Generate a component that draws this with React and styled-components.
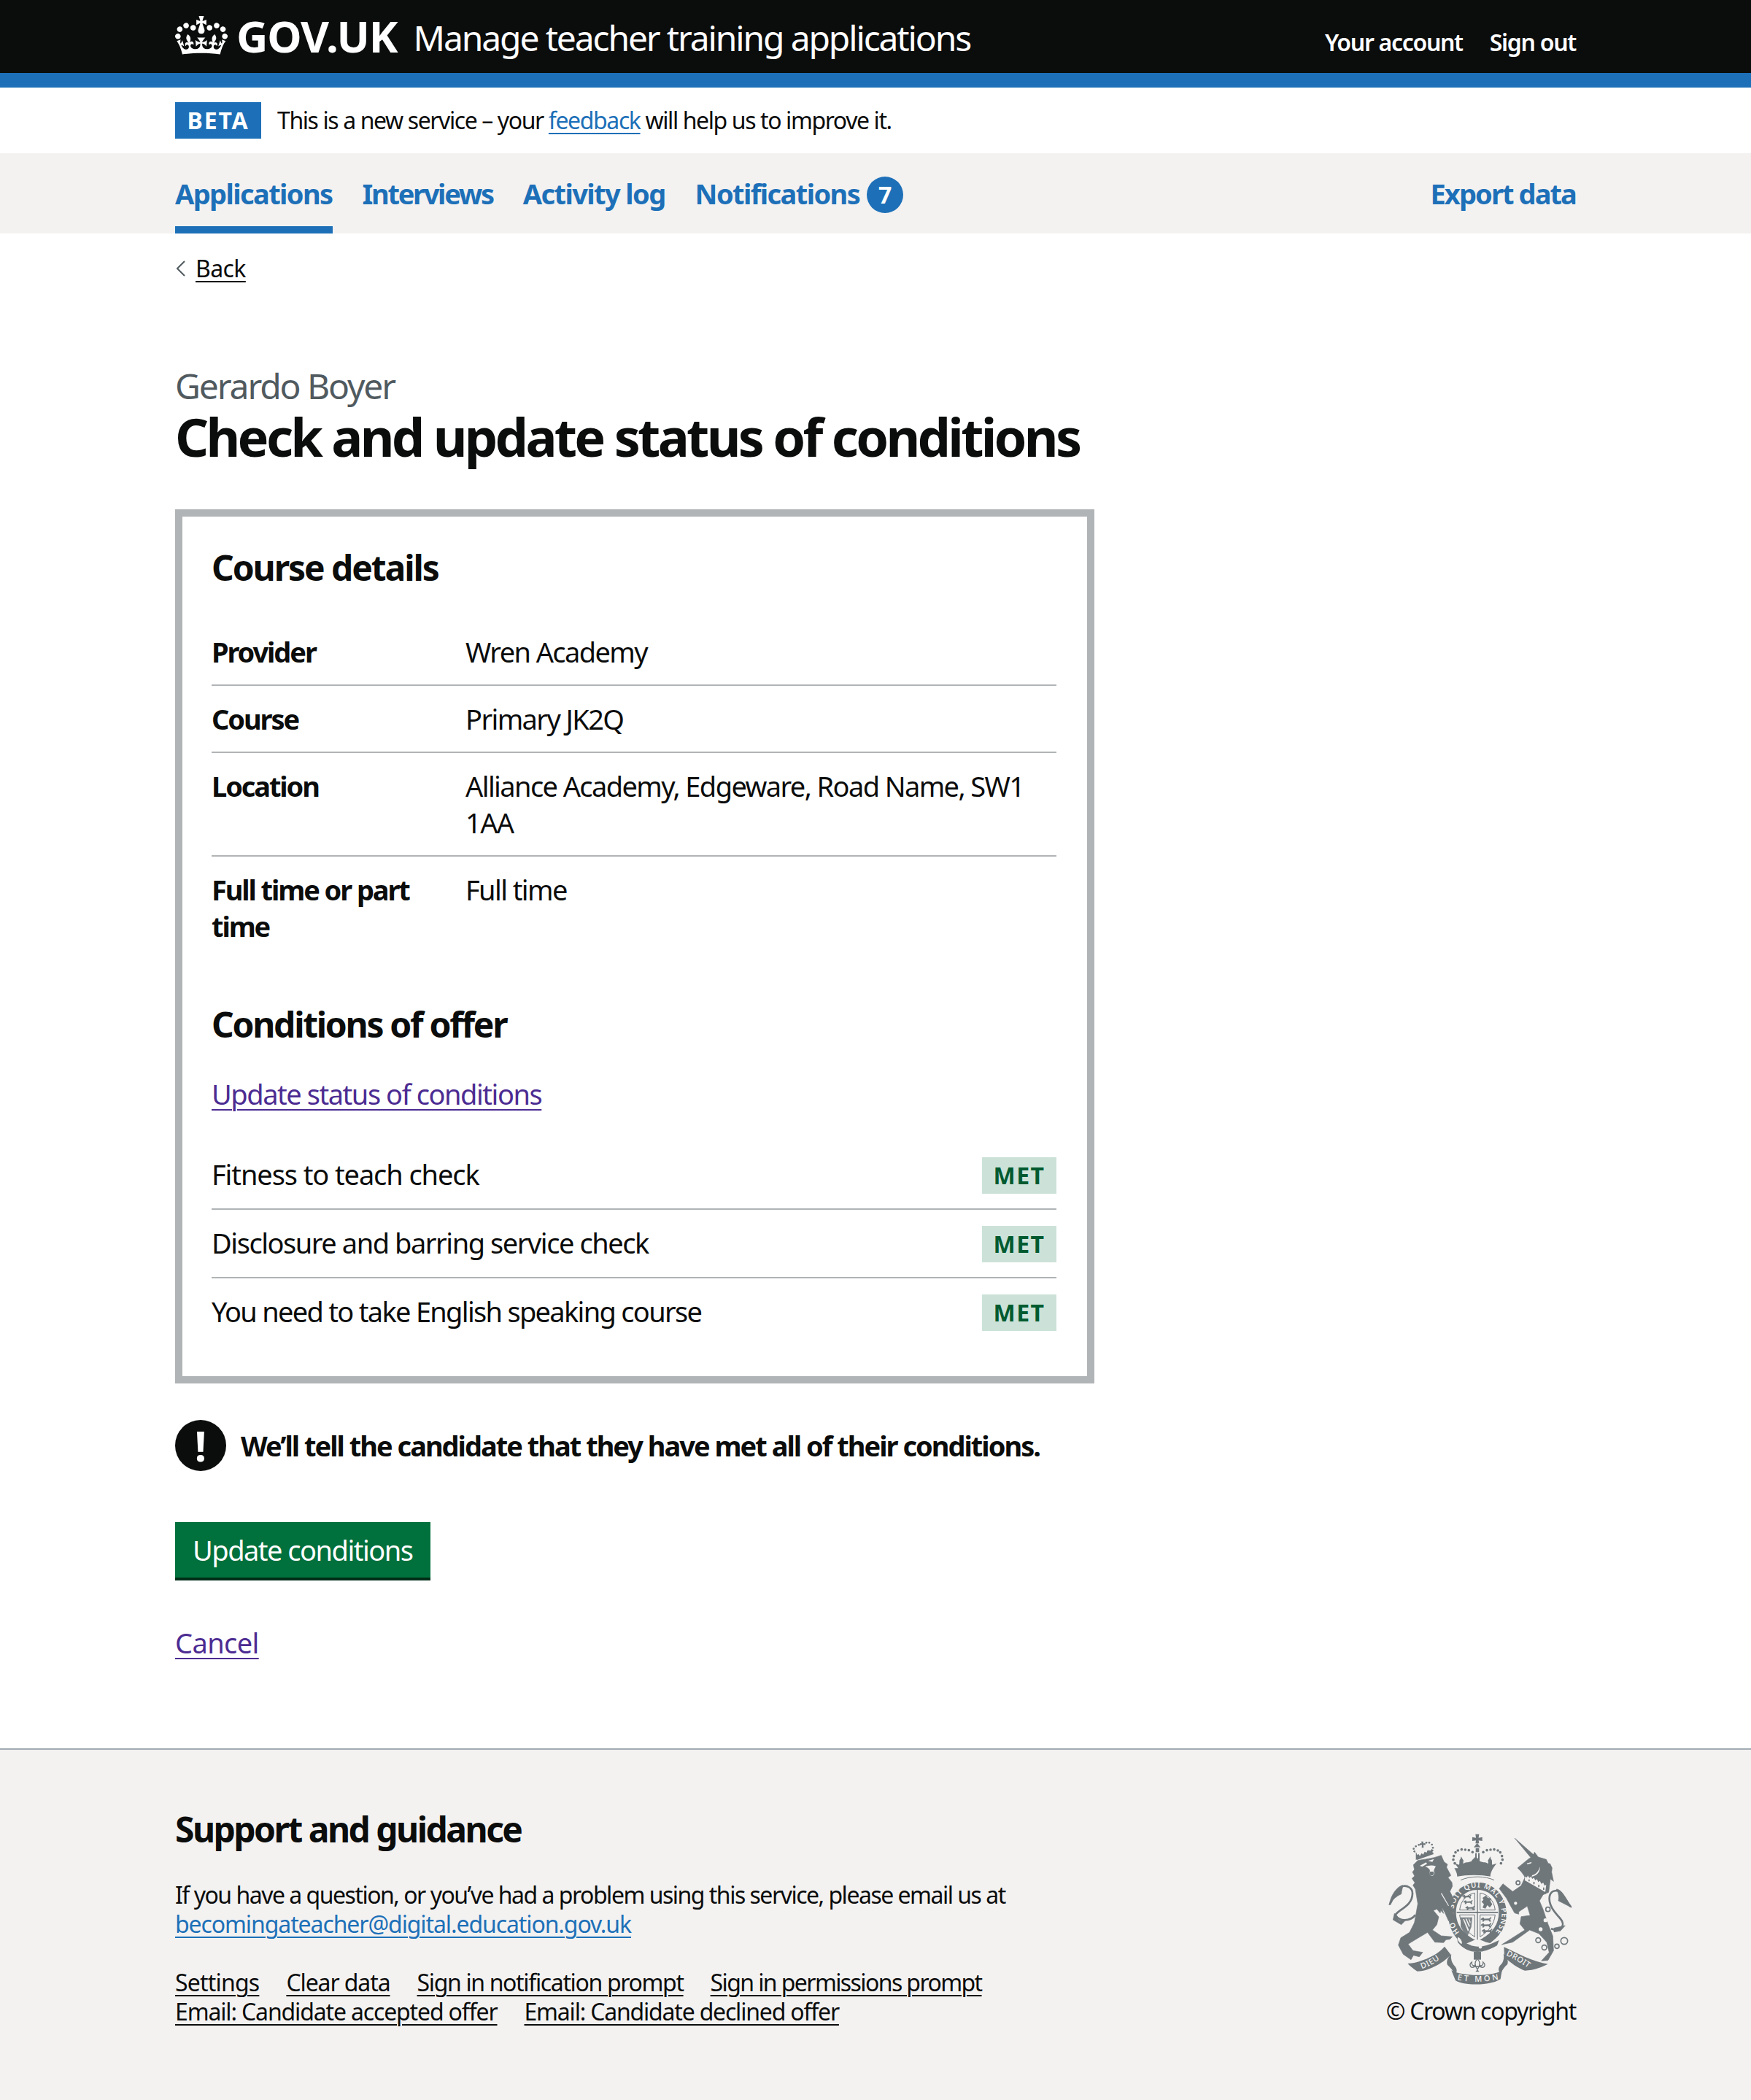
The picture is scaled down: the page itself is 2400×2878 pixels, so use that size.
import React from "react";
import styled, { createGlobalStyle } from "styled-components";

const FONT = `"Noto Sans", "Liberation Sans", Arial, sans-serif`;
const INK = "#0b0c0c";
const BLUE = "#1d70b8";
const VISITED = "#4c2c92";
const GREY = "#b1b4b6";

const Global = createGlobalStyle`
  html, body { margin: 0; padding: 0; background: #fff; }
  body { font-family: ${FONT}; color: ${INK}; font-size: 38px; line-height: 50px; }
  * { box-sizing: border-box; }
`;

const Container = styled.div`
  width: 1920px;
  margin: 0 auto;
`;

const HeaderBar = styled.header`
  background: ${INK};
  border-bottom: 20px solid ${BLUE};
  height: 120px;
`;
const HeaderInner = styled(Container)`
  display: flex;
  justify-content: space-between;
  height: 100px;
`;
const Brand = styled.div`
  display: flex;
  align-items: flex-start;
  padding-top: 22px;
  color: #fff;
`;
const Crown = styled.svg`
  width: 72px;
  height: 53px;
  flex: none;
`;
const Logotype = styled.span`
  font-weight: 700;
  font-size: 60px;
  line-height: 54px;
  letter-spacing: -1.1px;
  margin-left: 12px;
`;
const ServiceName = styled.span`
  font-size: 48px;
  line-height: 60px;
  letter-spacing: -2.15px;
  margin-left: 22px;
`;
const AccountNav = styled.nav`
  display: flex;
  gap: 37px;
  padding-top: 38px;
`;
const AccountLink = styled.a`
  color: #fff;
  font-size: 32px;
  line-height: 40px;
  font-weight: 600;
  letter-spacing: -1.3px;
`;

const PhaseBanner = styled(Container)`
  height: 90px;
  display: flex;
  align-items: center;
  gap: 22px;
`;
const PhaseTag = styled.strong`
  width: 118px;
  height: 50px;
  background: ${BLUE};
  color: #fff;
  font-size: 32px;
  line-height: 50px;
  font-weight: 700;
  letter-spacing: 1.8px;
  text-align: center;
`;
const PhaseText = styled.span`
  font-size: 32px;
  line-height: 40px;
  letter-spacing: -1.4px;
`;
const PhaseLink = styled.a`
  color: ${BLUE};
  text-decoration: underline;
  text-decoration-thickness: 2px;
  text-underline-offset: 5px;
`;

const PrimaryNav = styled.nav`
  height: 110px;
  background: #f3f2f1;
`;
const PrimaryInner = styled(Container)`
  display: flex;
  justify-content: space-between;
`;
const NavList = styled.div`
  display: flex;
  gap: 41px;
`;
const NavItem = styled.a`
  height: 110px;
  display: flex;
  align-items: flex-start;
  gap: 10px;
  padding-top: 30px;
  color: ${BLUE};
  font-size: 38px;
  line-height: 50px;
  font-weight: 700;
  letter-spacing: ${(p) => p.$ls || "-1.6px"};
  border-bottom: 10px solid ${(p) => (p.$active ? BLUE : "transparent")};
`;
const CountBadge = styled.span`
  width: 50px;
  height: 50px;
  margin-top: 2px;
  border-radius: 50%;
  background: ${BLUE};
  color: #fff;
  font-size: 32px;
  line-height: 50px;
  text-align: center;
  letter-spacing: 0;
`;

const BackLink = styled.a`
  display: flex;
  align-items: center;
  gap: 10px;
  margin-top: 28px;
  font-size: 32px;
  line-height: 40px;
  letter-spacing: -0.6px;
  color: ${INK};
`;
const BackText = styled.span`
  text-decoration: underline;
  text-decoration-thickness: 2px;
  text-underline-offset: 5px;
`;
const Chevron = styled.svg`
  width: 18px;
  height: 26px;
  flex: none;
`;

const Caption = styled.div`
  margin-top: 111px;
  font-size: 48px;
  line-height: 59px;
  color: #505a5f;
  letter-spacing: -2.1px;
`;
const Title = styled.h1`
  margin: 0 0 60px;
  font-size: 72px;
  line-height: 80px;
  font-weight: 700;
  letter-spacing: -3.7px;
`;

const Inset = styled.section`
  width: 1260px;
  border: 10px solid ${GREY};
  padding: 40px 42px 42px 40px;
`;
const SectionHeading = styled.h2`
  margin: 0 0 40px;
  font-size: 48px;
  line-height: 60px;
  font-weight: 700;
  letter-spacing: -2.1px;
`;
const SummaryRow = styled.div`
  display: grid;
  grid-template-columns: 348px 1fr;
  padding: 20px 0;
  border-bottom: ${(p) => (p.$last ? "none" : `2px solid ${GREY}`)};
`;
const SummaryKey = styled.div`
  font-weight: 700;
  letter-spacing: -2.1px;
  padding-right: 40px;
`;
const SummaryValue = styled.div`
  letter-spacing: -1.6px;
`;
const ConditionsHeading = styled(SectionHeading)`
  margin-top: 60px;
  letter-spacing: -2.3px;
`;
const TextLink = styled.a`
  color: ${VISITED};
  display: block;
  width: fit-content;
  letter-spacing: ${(p) => p.$ls || "-1.45px"};
  text-decoration: underline;
  text-decoration-thickness: 2px;
  text-underline-offset: 6px;
`;
const ConditionList = styled.div`
  margin-top: 40px;
`;
const ConditionRow = styled.div`
  display: flex;
  justify-content: space-between;
  align-items: center;
  padding: 22px 0 20px;
  border-bottom: ${(p) => (p.$last ? "none" : `2px solid ${GREY}`)};
`;
const ConditionText = styled.span`
  line-height: 46px;
  padding-bottom: 4px;
  letter-spacing: ${(p) => p.$ls};
`;
const MetTag = styled.strong`
  width: 102px;
  height: 50px;
  background: #cce2d8;
  color: #005a30;
  font-size: 32px;
  line-height: 50px;
  font-weight: 700;
  letter-spacing: 1.5px;
  text-align: center;
`;

const Warning = styled.div`
  display: flex;
  align-items: center;
  gap: 20px;
  margin-top: 50px;
  height: 70px;
`;
const WarningIcon = styled.span`
  width: 70px;
  height: 70px;
  border-radius: 50%;
  background: ${INK};
  color: #fff;
  font-size: 58px;
  line-height: 70px;
  font-weight: 700;
  text-align: center;
  flex: none;
`;
const WarningText = styled.strong`
  letter-spacing: -2px;
`;
const Button = styled.a`
  display: block;
  width: 350px;
  height: 80px;
  margin-top: 70px;
  padding-left: 24px;
  background: #00703c;
  border-bottom: 4px solid #002d18;
  color: #fff;
  line-height: 76px;
  letter-spacing: -1.5px;
`;
const CancelRow = styled.div`
  margin-top: 60px;
`;

const Footer = styled.footer`
  margin-top: 120px;
  height: 482px;
  background: #f3f2f1;
  border-top: 2px solid #a1acb2;
`;
const FooterInner = styled(Container)`
  display: flex;
  justify-content: space-between;
  padding-top: 79px;
`;
const FooterMain = styled.div`
  width: 1260px;
`;
const FooterHeading = styled.h2`
  margin: 0 0 40px;
  font-size: 48px;
  line-height: 60px;
  font-weight: 700;
  letter-spacing: -2.55px;
`;
const FooterText = styled.p`
  margin: 0 0 40px;
  font-size: 32px;
  line-height: 40px;
  letter-spacing: -1.5px;
`;
const FooterMail = styled.a`
  display: block;
  color: ${BLUE};
  letter-spacing: -1.1px;
  text-decoration: underline;
  text-decoration-thickness: 2px;
  text-underline-offset: 5px;
`;
const FooterLinks = styled.div`
  display: flex;
  flex-wrap: wrap;
  gap: 0 37px;
  font-size: 32px;
  line-height: 40px;
`;
const RowBreak = styled.span`
  flex-basis: 100%;
  height: 0;
`;
const FooterLink = styled.a`
  color: ${INK};
  letter-spacing: ${(p) => p.$ls};
  text-decoration: underline;
  text-decoration-thickness: 2px;
  text-underline-offset: 5px;
`;
const FooterAside = styled.div`
  display: flex;
  flex-direction: column;
  align-items: flex-end;
`;
const Crest = styled.svg`
  width: 260px;
  height: 220px;
  margin: 28px 0 11px 0;
`;
const Copyright = styled.div`
  font-size: 32px;
  line-height: 40px;
  letter-spacing: -1.3px;
`;

const CrownPath =
  "M25 30.2c3.5 1.5 7.7-.2 9.1-3.7 1.5-3.6-.2-7.8-3.9-9.2-3.6-1.4-7.6.3-9.1 3.9-1.4 3.5.3 7.5 3.9 9zM9 39.5c3.6 1.5 7.8-.2 9.2-3.7 1.5-3.6-.2-7.8-3.9-9.1-3.6-1.5-7.6.2-9.1 3.8-1.4 3.5.3 7.5 3.8 9zM4.4 57.2c3.5 1.5 7.7-.2 9.1-3.8 1.5-3.6-.2-7.7-3.9-9.1-3.5-1.5-7.6.3-9.1 3.8-1.4 3.5.3 7.6 3.9 9.1zm38.3-21.4c3.5 1.5 7.7-.2 9.1-3.8 1.5-3.6-.2-7.7-3.9-9.1-3.6-1.5-7.6.3-9.1 3.8-1.3 3.6.4 7.7 3.9 9.1zm64.4-5.6c-3.6 1.5-7.8-.2-9.1-3.7-1.5-3.6.2-7.8 3.8-9.2 3.6-1.4 7.7.3 9.2 3.9 1.3 3.5-.4 7.5-3.9 9zm15.9 9.3c-3.6 1.5-7.7-.2-9.1-3.7-1.5-3.6.2-7.8 3.7-9.1 3.6-1.5 7.7.2 9.2 3.8 1.5 3.5-.3 7.5-3.8 9zm4.7 17.7c-3.6 1.5-7.8-.2-9.2-3.8-1.5-3.6.2-7.7 3.9-9.1 3.6-1.5 7.7.3 9.2 3.8 1.3 3.5-.4 7.6-3.9 9.1zM89.3 35.8c-3.6 1.5-7.8-.2-9.2-3.8-1.4-3.6.2-7.7 3.9-9.1 3.6-1.5 7.7.3 9.2 3.8 1.4 3.6-.3 7.7-3.9 9.1zM69.7 17.7l8.9 4.7V9.3l-8.9 2.8c-.2-.3-.5-.6-.9-.9L72.4 0H59.6l3.5 11.2c-.3.3-.6.5-.9.9l-8.8-2.8v13.1l8.8-4.7c.3.3.6.7.9.9l-5 15.4v.1c-.2.8-.4 1.6-.4 2.4 0 4.1 3.1 7.5 7 8.1h.2c.3 0 .7.1 1 .1.4 0 .7 0 1-.1h.2c4-.6 7.1-4.1 7.1-8.1 0-.8-.1-1.7-.4-2.4V34l-5.1-15.4c.4-.2.7-.6 1-.9zM66 92.8c16.9 0 32.8 1.1 47.1 3.2 4-16.9 8.9-26.7 14-33.5l-9.6-3.4c1 4.9 1.1 7.2 0 10.2-1.5-1.4-3-4.3-4.2-8.7L108.6 76c2.8-2 5-3.2 7.5-3.3-4.4 9.4-10 11.9-13.6 11.2-4.3-.8-6.3-4.6-5.6-7.9 1-4.7 5.7-5.9 8-.5 4.3-8.7-3-11.4-7.6-8.8 7.1-7.2 7.9-13.5 2.1-21.1-8 6.1-8.1 12.3-4.5 20.8-4.7-5.4-12.1-2.5-9.5 6.2 3.4-5.2 7.9-2 7.2 3.1-.6 4.3-6.4 7.8-13.5 7.2-10.3-.9-10.9-8-11.2-13.8 2.5-.5 7.1 1.8 11 7.3L80.2 60c-4.1 4.4-8 5.3-12.3 5.4 1.4-4.4 8-11.6 8-11.6H55.5s6.4 7.2 7.9 11.6c-4.2-.1-8-1-12.3-5.4l1.4 16.4c3.9-5.5 8.5-7.7 10.9-7.3-.3 5.8-.9 12.8-11.1 13.8-7.2.6-12.9-2.9-13.5-7.2-.7-5 3.8-8.3 7.1-3.1 2.7-8.7-4.6-11.6-9.4-6.2 3.7-8.5 3.6-14.7-4.6-20.8-5.8 7.6-5 13.9 2.2 21.1-4.7-2.6-11.9.1-7.7 8.8 2.3-5.5 7.1-4.2 8.1.5.7 3.3-1.3 7.1-5.7 7.9-3.5.7-9-1.8-13.5-11.2 2.5.1 4.7 1.3 7.5 3.3l-4.7-15.4c-1.2 4.4-2.7 7.2-4.3 8.7-1.1-3-.9-5.3 0-10.2l-9.5 3.4c5 6.9 9.9 16.7 14 33.5 14.8-2.1 30.8-3.2 47.7-3.2z";

const CREST = "#6f777b";
const BG = "#f3f2f1";

const PASSANT = "M0 7L6 2 11 0 14 5 32 4 38-1 41 1 36 8 39 16 33 16 30 11 15 11 12 16 6 16 8 9 3 10Z";
const LIONS_TL = [[290, 275], [295, 298], [303, 322]];
const LIONS_BR = [[388, 368], [388, 392], [392, 416]];

const ARCH_L = [[355, 100], [340, 92], [325, 90], [310, 89], [295, 93], [285, 101], [278, 116], [276, 131], [282, 146]];
const ARCH_R = ARCH_L.map(([x, y]) => [754 - x, y]);
const LION_DOTS = [[116, 97], [113, 86], [122, 76], [134, 70], [165, 61], [177, 61], [188, 69], [192, 82], [190, 93]];
const CHAIN = [[542, 226, 8], [532, 310, 9], [665, 335, 9], [625, 462, 10], [650, 492, 10], [702, 487, 9], [732, 465, 14]];

function RoyalArms() {
  return (
    <Crest viewBox="0 0 780 660" aria-hidden="true">
      <defs>
        <path id="garter-arc" d="M302 430A100 110 0 1 1 448 430" />
        <path id="motto-l" d="M146 580Q205 560 250 512" />
        <path id="motto-m" d="M292 625Q375 642 468 622" />
        <path id="motto-r" d="M492 524Q550 550 604 592" />
      </defs>

      {/* royal crown */}
      <g fill={CREST}>
        <path d="M367 26h15l-2 15 15-3v16l-15-2 2 12h-15l2-12-15 2V38l15 3z" />
        <path d="M374 62l14 18h-28z" />
        <path d="M368 84h14v16h-14z" />
        <path d="M366 104h6v30h-6zM378 104h6v30h-6z" />
        <path d="M296 166c-4-8-10-14-14-20l18 6c2-8 0-14 2-20 6-4 4-10 6-14 4 6 6 12 10 16-2 6-2 10 0 14 6-6 12-6 18-6l14-4c4-8 12-12 12-14l6-6 6 6c2 2 8 6 12 14l14 4c6 0 12 0 18 6 2-4 2-8 0-14 4-4 6-10 10-16 2 4 0 10 6 14 2 6 0 12 2 20l18-6c-4 6-10 12-14 20-6 10-12 22-12 34-36-8-100-8-136 0 0-12-6-24-12-34z" />
        {[...ARCH_L, ...ARCH_R].map(([x, y]) => (
          <circle key={`a${x}-${y}`} cx={x} cy={y} r="5.4" />
        ))}
      </g>
      <path d="M306 215c40-18 100-18 138 0" fill="none" stroke={CREST} strokeWidth="3" />

      {/* shield and garter */}
      <path
        fill={CREST}
        d="M375 224c66 0 120 58 120 128 0 48-22 88-56 112l-12 10-16-4-36-14-36 16-20 8c-36-24-64-68-64-128 0-70 54-128 120-128z"
      />
      <path
        fill={BG}
        d="M375 255c50 0 88 38 88 92 0 58-36 94-88 118-52-24-88-60-88-118 0-54 38-92 88-92z"
      />
      <path fill={CREST} d="M373 255h4v205h-4zM290 345h170v5H290z" />
      <path fill="none" stroke={CREST} strokeWidth="3" d="M386 268c30 4 58 30 62 70h-62zM386 358h62c-4 40-30 70-62 90zM364 268c-30 4-58 30-62 70h62zM364 358h-62c4 40 30 70 62 90z" />
      <g fill={CREST}>
        {LIONS_TL.map(([x, y]) => (
          <path key={`t${x}`} d={PASSANT} transform={`translate(${x + 22} ${y}) scale(.95)`} />
        ))}
        {LIONS_BR.map(([x, y]) => (
          <path key={`b${y}`} d={PASSANT} transform={`translate(${x} ${y}) scale(1.1)`} />
        ))}
        <path d="M396 288l14-10 8 10 14 2-4 10 8 14-10 14-10-10-8 14-12-4 6-14-10-10 8-8z" />
        <path d="M306 368h48l-4 40-14 34-8 4-22-40z" opacity=".9" />
      </g>
      <path fill={BG} d="M316 376l4-2 20 46-4 6zM326 374l4-1 14 30-3 6zM338 373l3 0 6 14-2 6z" />
      <text fontFamily={FONT} fontWeight="600" fontSize="30" fill={BG}>
        <textPath href="#garter-arc" textLength="490" lengthAdjust="spacing">HONI SOIT QUI MAL Y PENSE</textPath>
      </text>
      <path fill={CREST} d="M292 452c20 12 50 34 84 36 32 2 60-14 88-26l-8 22c-24 14-52 26-82 26-32 0-62-16-80-40z" />
      <path fill={BG} d="M300 452c-4-4-8-2-6 6 2 10 10 16 16 20 4-6 0-18-10-26z" />
      <circle cx="353" cy="478" r="6.5" fill={BG} />
      <circle cx="387" cy="490" r="6.5" fill={BG} />

      {/* lion crown */}
      <g fill={CREST}>
        <path d="M144 56h8l1 8 8-1v8l-8-1 1 12h-8l1-12-9 2v-8l8 0z" />
        <path d="M122 98l6 14 6-4 4 8 8-12 6 6 6-12 8 4 4-10 12 2 6-8 4 8-6 14c-20 4-40 12-64 24z" />
        <path d="M124 124l68-24 3 8-68 24z" />
        {LION_DOTS.map(([x, y]) => (
          <circle key={`l${x}-${y}`} cx={x} cy={y} r="4" />
        ))}
      </g>

      {/* lion */}
      <g fill={CREST} stroke={CREST} strokeWidth="2" strokeLinejoin="round">
        <path d="M112 152L130 134C150 130 190 127 226 113L238 140 252 150 248 162 266 196 254 204 270 224 272 240 262 262 282 302 264 316 272 346 286 372 278 390 256 382 240 346 228 326 236 352 224 340 222 350 208 334 194 340 216 366 208 398 190 420 226 444 272 448 262 458 246 460 236 472 200 470 170 430 126 456 90 478 110 505 150 512 136 530 112 524 102 542 70 520 50 482 60 452 96 430 116 390 130 312 120 252 110 236 118 226 106 208 117 198 108 182 116 172Z" />
        <path
          d="M120 358C98 386 54 386 38 358 50 336 108 322 108 270 108 246 86 236 68 240 50 246 30 286 14 316"
          fill="none"
          strokeWidth="8"
        />
        <path d="M68 236C48 240 20 270 12 318 22 298 40 282 62 272 62 262 68 248 68 236z" />
        <path d="M34 352L28 378 62 398 78 382 52 380z" />
      </g>
      <path fill={BG} d="M138 156l26-14 4 6-20 12zM172 136l24-8-6 12zM160 160c14-6 30-8 44-2-4 8-8 12-8 20a10 12 0 1 1-16 0c0-8-8-14-20-18z" />
      <path fill={CREST} d="M180 180a9 10 0 1 0 14 0z" />
      <path fill={BG} d="M228 268l30 52-3 1-30-50z" />

      {/* unicorn */}
      <g fill={CREST} stroke={CREST} strokeWidth="2" strokeLinejoin="round">
        <path d="M528 42L610 114 596 124z" />
        <path d="M540 165L585 128 602 118 610 100 625 120 658 130 666 146 674 148 682 165 680 182 688 220 675 210 668 265 645 275 630 300 645 335 665 395 685 445 688 505 665 545 638 547 670 512 660 470 628 435 590 420 520 470 475 480 515 455 570 420 550 395 555 365 592 360 580 322 545 345 545 355 528 350 512 322 495 290 465 250 480 230 520 262 555 238 570 205 568 198 555 180Z" />
        <path
          d="M678 415C720 430 740 400 715 372 690 345 665 315 672 280 678 255 710 250 725 275 735 290 750 315 760 325"
          fill="none"
          strokeWidth="8"
        />
        <path d="M700 252C720 252 740 290 762 328 740 316 724 308 708 300 712 284 708 266 700 252z" />
        <path d="M690 412l46-10-20 22-26 4z" />
      </g>
      <path fill={BG} d="M578 146l20-6-2 6-16 4zM600 195c16-4 28-18 32-36 2 22-12 38-34 42z" />
      <path fill={BG} d="M571 200l8 4 3-8 7 10 6-6 6 10 6-5 6 11 7-5 5 12 7-5 6 12 8-4 5 12 7-4-4 30-84-48z" />
      <path fill={CREST} d="M571 218l86 50-1 4-88-50zM585 212h5v8h-5zM605 222h5v10h-5zM625 234h5v10h-5zM645 245h5v10h-5z" />
      <circle cx="655" cy="380" r="8" fill={BG} />
      <circle cx="635" cy="417" r="8" fill={BG} />
      {CHAIN.map(([x, y, r]) => (
        <circle key={`c${x}-${y}`} cx={x} cy={y} r={r} fill={BG} stroke={CREST} strokeWidth="5" />
      ))}

      {/* motto ribbons */}
      <g fill={CREST}>
        <path d="M88 558C130 556 205 530 240 488L266 522C230 560 170 590 128 590 112 580 100 570 88 558z" />
        <path d="M268 520c-16 14-22 30-16 44 12 10 22 22 30 38 12-8 10-24-2-36-10-10-16-30-12-46z" />
        <path d="M268 586C310 612 440 612 476 586L470 622C430 650 320 650 285 628z" />
        <path d="M482 518c16 14 22 30 16 44-12 10-20 22-26 36-14-8-12-24 0-36 10-10 14-28 10-44z" />
        <path d="M484 490C540 516 600 550 665 560 640 572 610 585 570 587 540 575 510 555 486 530z" />
        <path d="M360 510h30v32h-30z" />
        <path d="M375 582l-8 10h16z" />
      </g>
      <g fill={BG} stroke={CREST} strokeWidth="4">
        <path d="M375 538C388 552 388 566 375 582 362 566 362 552 375 538Z" />
        <path d="M362 572C344 580 340 560 352 552 350 562 356 568 364 566Z" />
        <path d="M388 572C406 580 410 560 398 552 400 562 394 568 386 566Z" />
      </g>
      <path d="M358 570H392" stroke={CREST} strokeWidth="5" />
      <g fontFamily={FONT} fontWeight="500" fontSize="33" fill={BG}>
        <text letterSpacing="2"><textPath href="#motto-l">DIEU</textPath></text>
        <text><textPath href="#motto-m" textLength="172" lengthAdjust="spacing">ET MON</textPath></text>
        <text letterSpacing="1"><textPath href="#motto-r">DROIT</textPath></text>
      </g>
    </Crest>
  );
}

export default function App() {
  return (
    <>
      <Global />
      <HeaderBar>
        <HeaderInner>
          <Brand>
            <Crown viewBox="0 0 132 97" aria-hidden="true">
              <path fill="currentColor" fillRule="evenodd" d={CrownPath} />
            </Crown>
            <Logotype>GOV.UK</Logotype>
            <ServiceName>Manage teacher training applications</ServiceName>
          </Brand>
          <AccountNav>
            <AccountLink>Your account</AccountLink>
            <AccountLink>Sign out</AccountLink>
          </AccountNav>
        </HeaderInner>
      </HeaderBar>

      <PhaseBanner>
        <PhaseTag>BETA</PhaseTag>
        <PhaseText>
          This is a new service – your <PhaseLink>feedback</PhaseLink> will help us to improve it.
        </PhaseText>
      </PhaseBanner>

      <PrimaryNav>
        <PrimaryInner>
          <NavList>
            <NavItem $active>Applications</NavItem>
            <NavItem $ls="-2.3px">Interviews</NavItem>
            <NavItem>Activity log</NavItem>
            <NavItem>
              Notifications <CountBadge>7</CountBadge>
            </NavItem>
          </NavList>
          <NavItem $ls="-1.9px">Export data</NavItem>
        </PrimaryInner>
      </PrimaryNav>

      <Container>
        <BackLink>
          <Chevron viewBox="0 0 18 26" aria-hidden="true">
            <path d="M13 3 3 13l10 10" fill="none" stroke="#505a5f" strokeWidth="2" />
          </Chevron>
          <BackText>Back</BackText>
        </BackLink>

        <Caption>Gerardo Boyer</Caption>
        <Title>Check and update status of conditions</Title>

        <Inset>
          <SectionHeading>Course details</SectionHeading>
          <SummaryRow>
            <SummaryKey>Provider</SummaryKey>
            <SummaryValue>Wren Academy</SummaryValue>
          </SummaryRow>
          <SummaryRow>
            <SummaryKey>Course</SummaryKey>
            <SummaryValue>Primary JK2Q</SummaryValue>
          </SummaryRow>
          <SummaryRow>
            <SummaryKey>Location</SummaryKey>
            <SummaryValue>Alliance Academy, Edgeware, Road Name, SW1 1AA</SummaryValue>
          </SummaryRow>
          <SummaryRow $last>
            <SummaryKey>Full time or part time</SummaryKey>
            <SummaryValue>Full time</SummaryValue>
          </SummaryRow>

          <ConditionsHeading>Conditions of offer</ConditionsHeading>
          <TextLink>Update status of conditions</TextLink>
          <ConditionList>
            <ConditionRow>
              <ConditionText $ls="-1.1px">Fitness to teach check</ConditionText>
              <MetTag>MET</MetTag>
            </ConditionRow>
            <ConditionRow>
              <ConditionText $ls="-1.45px">Disclosure and barring service check</ConditionText>
              <MetTag>MET</MetTag>
            </ConditionRow>
            <ConditionRow $last>
              <ConditionText $ls="-1.7px">You need to take English speaking course</ConditionText>
              <MetTag>MET</MetTag>
            </ConditionRow>
          </ConditionList>
        </Inset>

        <Warning>
          <WarningIcon>!</WarningIcon>
          <WarningText>We’ll tell the candidate that they have met all of their conditions.</WarningText>
        </Warning>

        <Button>Update conditions</Button>
        <CancelRow>
          <TextLink $ls="-0.6px">Cancel</TextLink>
        </CancelRow>
      </Container>

      <Footer>
        <FooterInner>
          <FooterMain>
            <FooterHeading>Support and guidance</FooterHeading>
            <FooterText>
              If you have a question, or you’ve had a problem using this service, please email us at
              <FooterMail>becomingateacher@digital.education.gov.uk</FooterMail>
            </FooterText>
            <FooterLinks>
              <FooterLink $ls="-0.8px">Settings</FooterLink>
              <FooterLink $ls="-1.1px">Clear data</FooterLink>
              <FooterLink $ls="-1.35px">Sign in notification prompt</FooterLink>
              <FooterLink $ls="-1.6px">Sign in permissions prompt</FooterLink>
              <RowBreak />
              <FooterLink $ls="-1.15px">Email: Candidate accepted offer</FooterLink>
              <FooterLink $ls="-1.2px">Email: Candidate declined offer</FooterLink>
            </FooterLinks>
          </FooterMain>
          <FooterAside>
            <RoyalArms />
            <Copyright>© Crown copyright</Copyright>
          </FooterAside>
        </FooterInner>
      </Footer>
    </>
  );
}
